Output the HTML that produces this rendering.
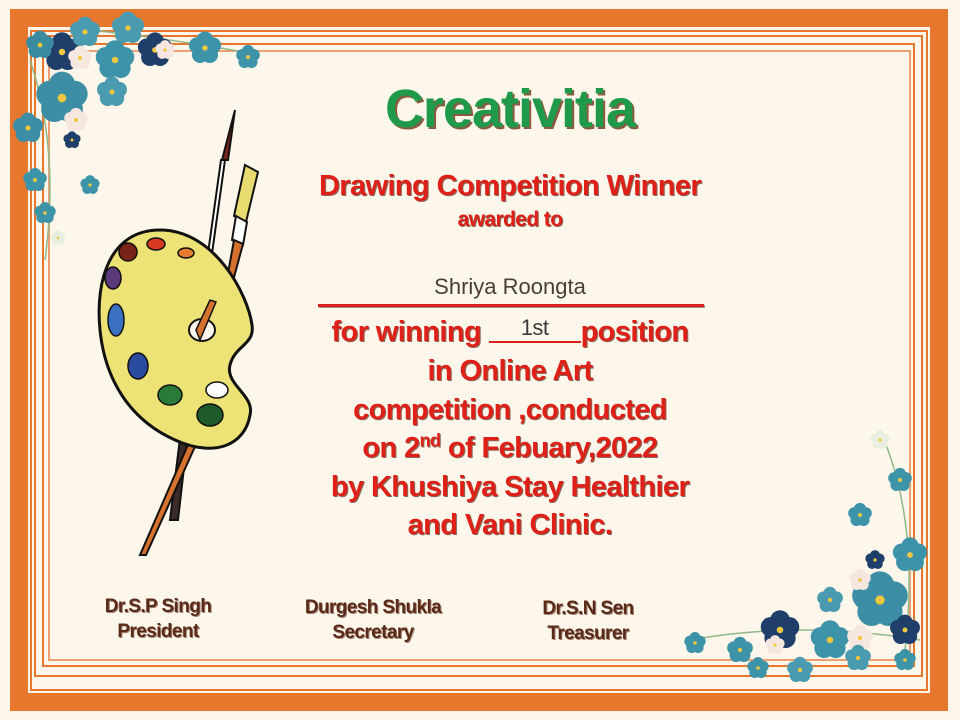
<!DOCTYPE html>
<html><head><meta charset="utf-8"><style>
html,body{margin:0;padding:0}
body{width:960px;height:720px;position:relative;background:#fdf6ea;overflow:hidden;font-family:"Liberation Sans",sans-serif}
.b{position:absolute;box-sizing:border-box}
.t{position:absolute;left:260px;width:500px;text-align:center;font-weight:bold;color:#df2019;text-shadow:1px 1px 0 #8a6a5a;letter-spacing:-0.6px;white-space:nowrap}
.s{position:absolute;width:200px;text-align:center;font-weight:bold;font-size:19px;line-height:25px;color:#5a2a18;text-shadow:1px 1px 0 #a08070;letter-spacing:-0.6px}
</style></head><body>
<div class="b" style="left:10px;top:9px;width:938px;height:702px;border:18px solid #e8772e;background:#fdf6ea"></div>
<div class="b" style="left:30px;top:30px;width:898px;height:661px;border:2px solid #e8772e"></div>
<div class="b" style="left:34px;top:35px;width:889px;height:642px;border:2px solid #e8772e"></div>
<div class="b" style="left:42px;top:43px;width:873px;height:624px;border:2px solid #e8772e"></div>
<div class="b" style="left:48px;top:50px;width:863px;height:611px;border:2px solid #efa070"></div>

<svg width="960" height="720" style="position:absolute;left:0;top:0">
<defs>
<g id="f"><g fill="currentColor"><circle cx="0" cy="-0.55" r="0.55"/><circle cx="0.52" cy="-0.17" r="0.55"/><circle cx="0.32" cy="0.45" r="0.55"/><circle cx="-0.32" cy="0.45" r="0.55"/><circle cx="-0.52" cy="-0.17" r="0.55"/></g><circle r="0.18" fill="#f0c840"/></g>
</defs>
<g stroke="#8fb88a" stroke-width="1.5" fill="none"><path d="M30 60 Q60 150 45 260"/><path d="M90 30 Q180 40 260 55"/></g>
<g>
<use href="#f" transform="translate(62,52) scale(18)" color="#1f3f6a"/>
<use href="#f" transform="translate(40,45) scale(13)" color="#3a8aa0"/>
<use href="#f" transform="translate(85,32) scale(14)" color="#4a9ab0"/>
<use href="#f" transform="translate(128,28) scale(15)" color="#4a9ab0"/>
<use href="#f" transform="translate(155,50) scale(16)" color="#1f3f6a"/>
<use href="#f" transform="translate(115,60) scale(18)" color="#3d93a8"/>
<use href="#f" transform="translate(80,58) scale(11)" color="#f5e6e0"/>
<use href="#f" transform="translate(165,50) scale(9)" color="#f5e6e0"/>
<use href="#f" transform="translate(205,48) scale(15)" color="#3d93a8"/>
<use href="#f" transform="translate(248,57) scale(11)" color="#3d93a8"/>
<use href="#f" transform="translate(62,98) scale(24)" color="#3d8ea5"/>
<use href="#f" transform="translate(112,92) scale(14)" color="#4a9ab0"/>
<use href="#f" transform="translate(76,120) scale(11)" color="#f5e6e0"/>
<use href="#f" transform="translate(28,128) scale(14)" color="#3d8ea5"/>
<use href="#f" transform="translate(72,140) scale(8)" color="#1f3f6a"/>
<use href="#f" transform="translate(35,180) scale(11)" color="#3d93a8"/>
<use href="#f" transform="translate(90,185) scale(9)" color="#3d93a8"/>
<use href="#f" transform="translate(45,213) scale(10)" color="#3d93a8"/>
<use href="#f" transform="translate(58,238) scale(7)" color="#e8efe0"/>
</g>
<g stroke="#8fb88a" stroke-width="1.5" fill="none"><path d="M690 640 Q800 620 920 640"/><path d="M880 430 Q920 520 905 650"/></g>
<g>
<use href="#f" transform="translate(880,440) scale(9)" color="#e8efe0"/>
<use href="#f" transform="translate(900,480) scale(11)" color="#3d93a8"/>
<use href="#f" transform="translate(860,515) scale(11)" color="#3d93a8"/>
<use href="#f" transform="translate(910,555) scale(16)" color="#3d93a8"/>
<use href="#f" transform="translate(875,560) scale(9)" color="#1f3f6a"/>
<use href="#f" transform="translate(880,600) scale(26)" color="#3d8ea5"/>
<use href="#f" transform="translate(860,580) scale(10)" color="#f5e6e0"/>
<use href="#f" transform="translate(905,630) scale(14)" color="#1f3f6a"/>
<use href="#f" transform="translate(830,600) scale(12)" color="#4a9ab0"/>
<use href="#f" transform="translate(780,630) scale(18)" color="#1f3f6a"/>
<use href="#f" transform="translate(830,640) scale(18)" color="#3d93a8"/>
<use href="#f" transform="translate(860,638) scale(12)" color="#f5e6e0"/>
<use href="#f" transform="translate(858,658) scale(12)" color="#4a9ab0"/>
<use href="#f" transform="translate(800,670) scale(12)" color="#4a9ab0"/>
<use href="#f" transform="translate(740,650) scale(12)" color="#3d93a8"/>
<use href="#f" transform="translate(775,645) scale(9)" color="#f5e6e0"/>
<use href="#f" transform="translate(758,668) scale(10)" color="#3d93a8"/>
<use href="#f" transform="translate(695,643) scale(10)" color="#3d93a8"/>
<use href="#f" transform="translate(905,660) scale(10)" color="#3d93a8"/>
</g>
<g stroke="#111" stroke-width="2">
<path d="M235 110 L228 160 L222 160 Z" fill="#7a2418"/>
<path d="M225 160 L200 340 L196 340 L221 160 Z" fill="#fff"/>
<path d="M203 250 L170 520 L178 520 L209 250 Z" fill="#3a2a28"/>
<path d="M245 165 L258 172 L246 222 L234 216 Z" fill="#e8dc70"/>
<path d="M236 216 L247 222 L243 245 L232 240 Z" fill="#fff"/>
<path d="M234 240 L243 244 L190 440 L140 555 L146 555 L198 440 Z" fill="#d4722e"/>
</g>
<path d="M160 230 C110 230 95 280 100 330 C105 380 130 420 175 440 C215 458 245 445 250 415 C255 395 225 385 230 365 C235 345 255 345 252 325 C248 295 215 230 160 230 Z" fill="#ece276" stroke="#111" stroke-width="3"/>
<ellipse cx="202" cy="330" rx="13" ry="11" fill="#fdf6ea" stroke="#111" stroke-width="2"/>
<path d="M196 330 L210 300 L216 302 L200 340 Z" fill="#d4722e" stroke="#111" stroke-width="1.5"/>
<g stroke="#111" stroke-width="1.5">
<ellipse cx="128" cy="252" rx="9" ry="9" fill="#7a2418"/>
<ellipse cx="156" cy="244" rx="9" ry="6" fill="#d43820"/>
<ellipse cx="186" cy="253" rx="8" ry="5" fill="#e87a30"/>
<ellipse cx="113" cy="278" rx="8" ry="11" fill="#5a3a7a"/>
<ellipse cx="116" cy="320" rx="8" ry="16" fill="#3a70c0"/>
<ellipse cx="138" cy="366" rx="10" ry="13" fill="#2a4aa0"/>
<ellipse cx="170" cy="395" rx="12" ry="10" fill="#2a7a3a"/>
<ellipse cx="217" cy="390" rx="11" ry="8" fill="#fff"/>
<ellipse cx="210" cy="415" rx="13" ry="11" fill="#1e5a2a"/>
</g>
</svg>

<div class="t" style="top:78px;font-size:54px;line-height:62px;color:#1f9a4a;text-shadow:2px 2px 0 #8a5a40;letter-spacing:-1px">Creativitia</div>
<div class="t" style="top:169px;font-size:29px;line-height:34px">Drawing Competition Winner</div>
<div class="t" style="top:207px;font-size:21px;line-height:26px">awarded to</div>
<div class="t" style="top:273px;font-size:22px;line-height:28px;font-weight:normal;color:#4a3d35;text-shadow:none;letter-spacing:0">Shriya Roongta</div>
<div class="b" style="left:318px;top:304px;width:386px;height:3px;background:#d8201a;box-shadow:1px 1px 0 #a09080"></div>
<div class="t" style="top:315px;font-size:29px;line-height:34px">for winning <span style="display:inline-block;width:92px;border-bottom:2px solid #d8201a;position:relative;height:22px;vertical-align:-2px"><span style="position:absolute;left:0;right:0;top:-8px;font-weight:normal;color:#3a3a3a;text-shadow:none;font-size:22px">1st</span></span>position</div>
<div class="t" style="top:354px;font-size:29px;line-height:34px">in Online Art</div>
<div class="t" style="top:393px;font-size:29px;line-height:34px">competition ,conducted</div>
<div class="t" style="top:431px;font-size:29px;line-height:34px">on 2<sup style="font-size:18px;line-height:0">nd</sup> of Febuary,2022</div>
<div class="t" style="top:470px;font-size:29px;line-height:34px">by Khushiya Stay Healthier</div>
<div class="t" style="top:508px;font-size:29px;line-height:34px">and Vani Clinic.</div>

<div class="s" style="left:58px;top:594px">Dr.S.P Singh<br>President</div>
<div class="s" style="left:273px;top:595px">Durgesh Shukla<br>Secretary</div>
<div class="s" style="left:488px;top:596px">Dr.S.N Sen<br>Treasurer</div>
</body></html>
